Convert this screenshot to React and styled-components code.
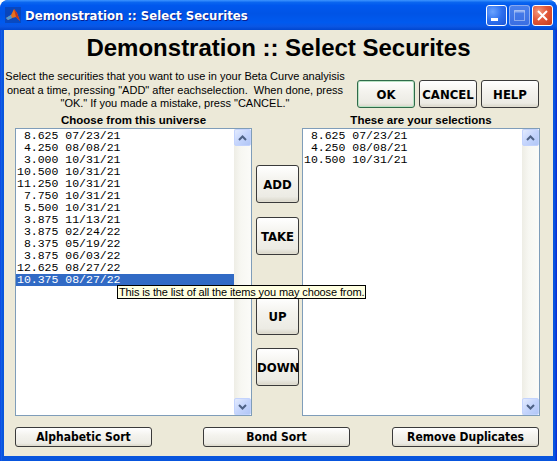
import React from 'react';
import styled, { createGlobalStyle } from 'styled-components';

const GlobalStyle = createGlobalStyle`
  html, body {
    margin: 0;
    padding: 0;
    background: #ffffff;
  }
  body {
    width: 557px;
    height: 461px;
    overflow: hidden;
  }
`;

const Window = styled.div`
  width: 557px;
  height: 461px;
  box-sizing: border-box;
  display: flex;
  flex-direction: column;
  background: linear-gradient(to right, #0831d9 0px, #166aee 1px, #0855dd 2px, #0855dd 555px, #0831d9 556px);
  border-radius: 8px 8px 0 0;
  overflow: hidden;
`;

const TitleBar = styled.div`
  height: 30px;
  flex: none;
  display: flex;
  align-items: center;
  padding: 0 4px 0 5px;
  background: linear-gradient(
    to bottom,
    #3d95ff 0%,
    #0a66f0 8%,
    #0058ee 18%,
    #0054e6 45%,
    #005aef 75%,
    #0a56e4 88%,
    #0046cf 100%
  );
  border-radius: 8px 8px 0 0;
`;

const AppIcon = styled.svg`
  width: 16px;
  height: 16px;
  flex: none;
`;

const TitleText = styled.span`
  margin-left: 4px;
  font-family: 'DejaVu Sans Condensed', 'Liberation Sans', sans-serif;
  font-weight: bold;
  font-size: 13px;
  color: #ffffff;
  text-shadow: 1px 1px 0 #0a1f8f;
  flex: 1;
  white-space: nowrap;
`;

const Controls = styled.div`
  display: flex;
  gap: 2px;
`;

const ControlButton = styled.div`
  width: 21px;
  height: 21px;
  box-sizing: border-box;
  border: 1px solid ${p => (p.$faded ? 'rgba(255,255,255,0.4)' : '#ffffff')};
  border-radius: 3px;
  display: flex;
  align-items: center;
  justify-content: center;
  background: ${p =>
    p.$kind === 'close'
      ? 'radial-gradient(circle at 30% 30%, #f39b7f 0%, #e2583a 45%, #c53a1c 100%)'
      : p.$faded
      ? 'linear-gradient(to bottom, #4a80ec, #3a6ee2)'
      : 'radial-gradient(circle at 30% 30%, #6aa3ff 0%, #2d6fee 50%, #1c55d6 100%)'};
`;

const Client = styled.div`
  flex: 1;
  margin: 0 4px 5px 4px;
  background: #ece9d8;
  display: flex;
  flex-direction: column;
  padding: 0 13px 0 11px;
`;

const Heading = styled.h1`
  margin: 0 -13px 0 -11px;
  height: 34px;
  line-height: 36px;
  text-align: center;
  font-family: 'Liberation Sans', Arial, sans-serif;
  font-size: 24px;
  font-weight: bold;
  color: #000000;
`;

const TopRow = styled.div`
  display: flex;
  height: 48px;
  margin-left: -11px;
`;

const Instructions = styled.p`
  margin: 0;
  width: 342px;
  padding-top: 6px;
  text-align: center;
  font-family: 'Liberation Sans', Arial, sans-serif;
  font-size: 11px;
  line-height: 13.5px;
  color: #000000;
`;

const ActionGroup = styled.div`
  display: flex;
  gap: 4px;
  margin-left: 11px;
  padding-top: 16px;
`;

const PushButton = styled.button`
  box-sizing: border-box;
  width: ${p => p.$w}px;
  height: ${p => p.$h}px;
  margin-top: ${p => p.$mt || 0}px;
  margin-left: ${p => p.$ml || 0}px;
  padding: 0;
  border: 1px solid ${p => (p.$focused ? '#2f6b4a' : '#3a3a3a')};
  border-radius: 3px;
  background: linear-gradient(to bottom, #ffffff 0%, #f4f3ee 40%, #ecebe4 85%, #d8d5c8 100%);
  box-shadow: ${p => (p.$focused ? 'inset 0 0 0 1px #b9e3c3' : 'inset 0 -1px 0 #e0ddd0')};
  font-family: 'DejaVu Sans Condensed', 'Liberation Sans', sans-serif;
  font-weight: bold;
  font-size: ${p => p.$fs || 13}px;
  color: #000000;
  white-space: nowrap;
  cursor: pointer;
`;

const LabelRow = styled.div`
  display: grid;
  grid-template-columns: 237px 50px 238px;
  height: 16px;
`;

const ListLabel = styled.div`
  grid-column: ${p => p.$col};
  text-align: center;
  line-height: 16px;
  font-family: 'Liberation Sans', Arial, sans-serif;
  font-weight: bold;
  font-size: 11.5px;
  color: #000000;
`;

const MainRow = styled.div`
  position: relative;
  display: flex;
  height: 288px;
`;

const ListBox = styled.div`
  box-sizing: border-box;
  width: ${p => p.$w}px;
  height: 100%;
  border: 1px solid #7f9db9;
  background: #ffffff;
  display: flex;
`;

const ListItems = styled.div`
  flex: 1;
  padding: 1px 0 0 1px;
`;

const ListRow = styled.div`
  height: 12px;
  line-height: 12px;
  font-family: 'Liberation Mono', 'Courier New', monospace;
  font-size: 11.5px;
  white-space: pre;
  color: ${p => (p.$selected ? '#ffffff' : '#000000')};
  background: ${p => (p.$selected ? '#316ac5' : 'transparent')};
  margin-left: ${p => (p.$selected ? -1 : 0)}px;
  padding-left: ${p => (p.$selected ? 1 : 0)}px;
`;

const ScrollTrack = styled.div`
  width: 17px;
  flex: none;
  display: flex;
  flex-direction: column;
  justify-content: space-between;
  background: linear-gradient(to right, #eeede5 0%, #f7f7f2 40%, #fbfbf8 100%);
`;

const ScrollArrow = styled.div`
  width: 17px;
  height: 17px;
  box-sizing: border-box;
  border: 1px solid #c3d3fd;
  border-radius: 2px;
  background: linear-gradient(to bottom right, #e3ebfe 0%, #c5d5fc 50%, #b1c6f6 100%);
  display: flex;
  align-items: center;
  justify-content: center;
`;

const MiddleColumn = styled.div`
  width: 50px;
  flex: none;
  display: flex;
  flex-direction: column;
  align-items: flex-start;
  padding-left: 4px;
  box-sizing: border-box;
`;

const Tooltip = styled.div`
  position: absolute;
  left: 102px;
  top: 157px;
  height: 14px;
  box-sizing: border-box;
  padding: 0 1px;
  border: 1px solid #000000;
  background: #ffffe1;
  font-family: 'Liberation Sans', Arial, sans-serif;
  font-size: 11px;
  letter-spacing: -0.12px;
  line-height: 12px;
  color: #000000;
  white-space: nowrap;
`;

const BottomRow = styled.div`
  display: flex;
  margin-top: 11px;
`;

const universe = [
  ' 8.625 07/23/21',
  ' 4.250 08/08/21',
  ' 3.000 10/31/21',
  '10.500 10/31/21',
  '11.250 10/31/21',
  ' 7.750 10/31/21',
  ' 5.500 10/31/21',
  ' 3.875 11/13/21',
  ' 3.875 02/24/22',
  ' 8.375 05/19/22',
  ' 3.875 06/03/22',
  '12.625 08/27/22',
  '10.375 08/27/22',
];

const selections = [' 8.625 07/23/21', ' 4.250 08/08/21', '10.500 10/31/21'];

const Chevron = ({ down }) => (
  <svg width="9" height="6" viewBox="0 0 9 6">
    <path
      d={down ? 'M1 1 L4.5 4.5 L8 1' : 'M1 5 L4.5 1.5 L8 5'}
      fill="none"
      stroke="#4d6185"
      strokeWidth="2"
    />
  </svg>
);

const ScrollBar = () => (
  <ScrollTrack>
    <ScrollArrow>
      <Chevron />
    </ScrollArrow>
    <ScrollArrow>
      <Chevron down />
    </ScrollArrow>
  </ScrollTrack>
);

const MatlabIcon = () => (
  <AppIcon viewBox="0 0 16 16">
    <rect x="0" y="0" width="16" height="16" fill="#1a2a6a" opacity="0.35" />
    <path d="M1 11 L6 8 L9 2 L12 6 L15 14 L11 10 L7 11 L3 13 Z" fill="#e8701c" />
    <path d="M9 2 L12 6 L15 14 L11 10 Z" fill="#c4361a" />
    <path d="M1 11 L6 8 L7 11 L3 13 Z" fill="#4b9ad8" />
  </AppIcon>
);

const App = () => (
  <>
    <GlobalStyle />
    <Window>
      <TitleBar>
        <MatlabIcon />
        <TitleText>Demonstration :: Select Securites</TitleText>
        <Controls>
          <ControlButton>
            <svg width="19" height="19" viewBox="0 0 19 19">
              <rect x="4" y="12" width="7" height="3" fill="#ffffff" />
            </svg>
          </ControlButton>
          <ControlButton $faded>
            <svg width="19" height="19" viewBox="0 0 19 19">
              <rect x="4.5" y="4.5" width="10" height="10" fill="none" stroke="rgba(255,255,255,0.4)" strokeWidth="1" />
              <rect x="4.5" y="4.5" width="10" height="2" fill="rgba(255,255,255,0.4)" />
            </svg>
          </ControlButton>
          <ControlButton $kind="close">
            <svg width="19" height="19" viewBox="0 0 19 19">
              <path d="M5 5 L14 14 M14 5 L5 14" stroke="#ffffff" strokeWidth="2" />
            </svg>
          </ControlButton>
        </Controls>
      </TitleBar>
      <Client>
        <Heading>Demonstration :: Select Securites</Heading>
        <TopRow>
          <Instructions>
            Select the securities that you want to use in your Beta Curve analyisis
            <br />
            oneat a time, pressing "ADD" after eachselection.&nbsp; When done, press
            <br />
            "OK." If you made a mistake, press "CANCEL."
          </Instructions>
          <ActionGroup>
            <PushButton $w={58} $h={28} $focused>OK</PushButton>
            <PushButton $w={58} $h={28}>CANCEL</PushButton>
            <PushButton $w={58} $h={28}>HELP</PushButton>
          </ActionGroup>
        </TopRow>
        <LabelRow>
          <ListLabel $col={1}>Choose from this universe</ListLabel>
          <ListLabel $col={3}>These are your selections</ListLabel>
        </LabelRow>
        <MainRow>
          <ListBox $w={237}>
            <ListItems>
              {universe.map((item, i) => (
                <ListRow key={i} $selected={i === universe.length - 1}>
                  {item}
                </ListRow>
              ))}
            </ListItems>
            <ScrollBar />
          </ListBox>
          <MiddleColumn>
            <PushButton $w={43} $h={38} $mt={37}>ADD</PushButton>
            <PushButton $w={43} $h={38} $mt={14}>TAKE</PushButton>
            <PushButton $w={43} $h={38} $mt={42}>UP</PushButton>
            <PushButton $w={43} $h={38} $mt={13}>DOWN</PushButton>
          </MiddleColumn>
          <ListBox $w={238}>
            <ListItems>
              {selections.map((item, i) => (
                <ListRow key={i}>{item}</ListRow>
              ))}
            </ListItems>
            <ScrollBar />
          </ListBox>
          <Tooltip>This is the list of all the items you may choose from.</Tooltip>
        </MainRow>
        <BottomRow>
          <PushButton $w={137} $h={20} $fs={12}>Alphabetic Sort</PushButton>
          <PushButton $w={147} $h={20} $fs={12} $ml={51}>Bond Sort</PushButton>
          <PushButton $w={147} $h={20} $fs={12} $ml={42}>Remove Duplicates</PushButton>
        </BottomRow>
      </Client>
    </Window>
  </>
);

export default App;
